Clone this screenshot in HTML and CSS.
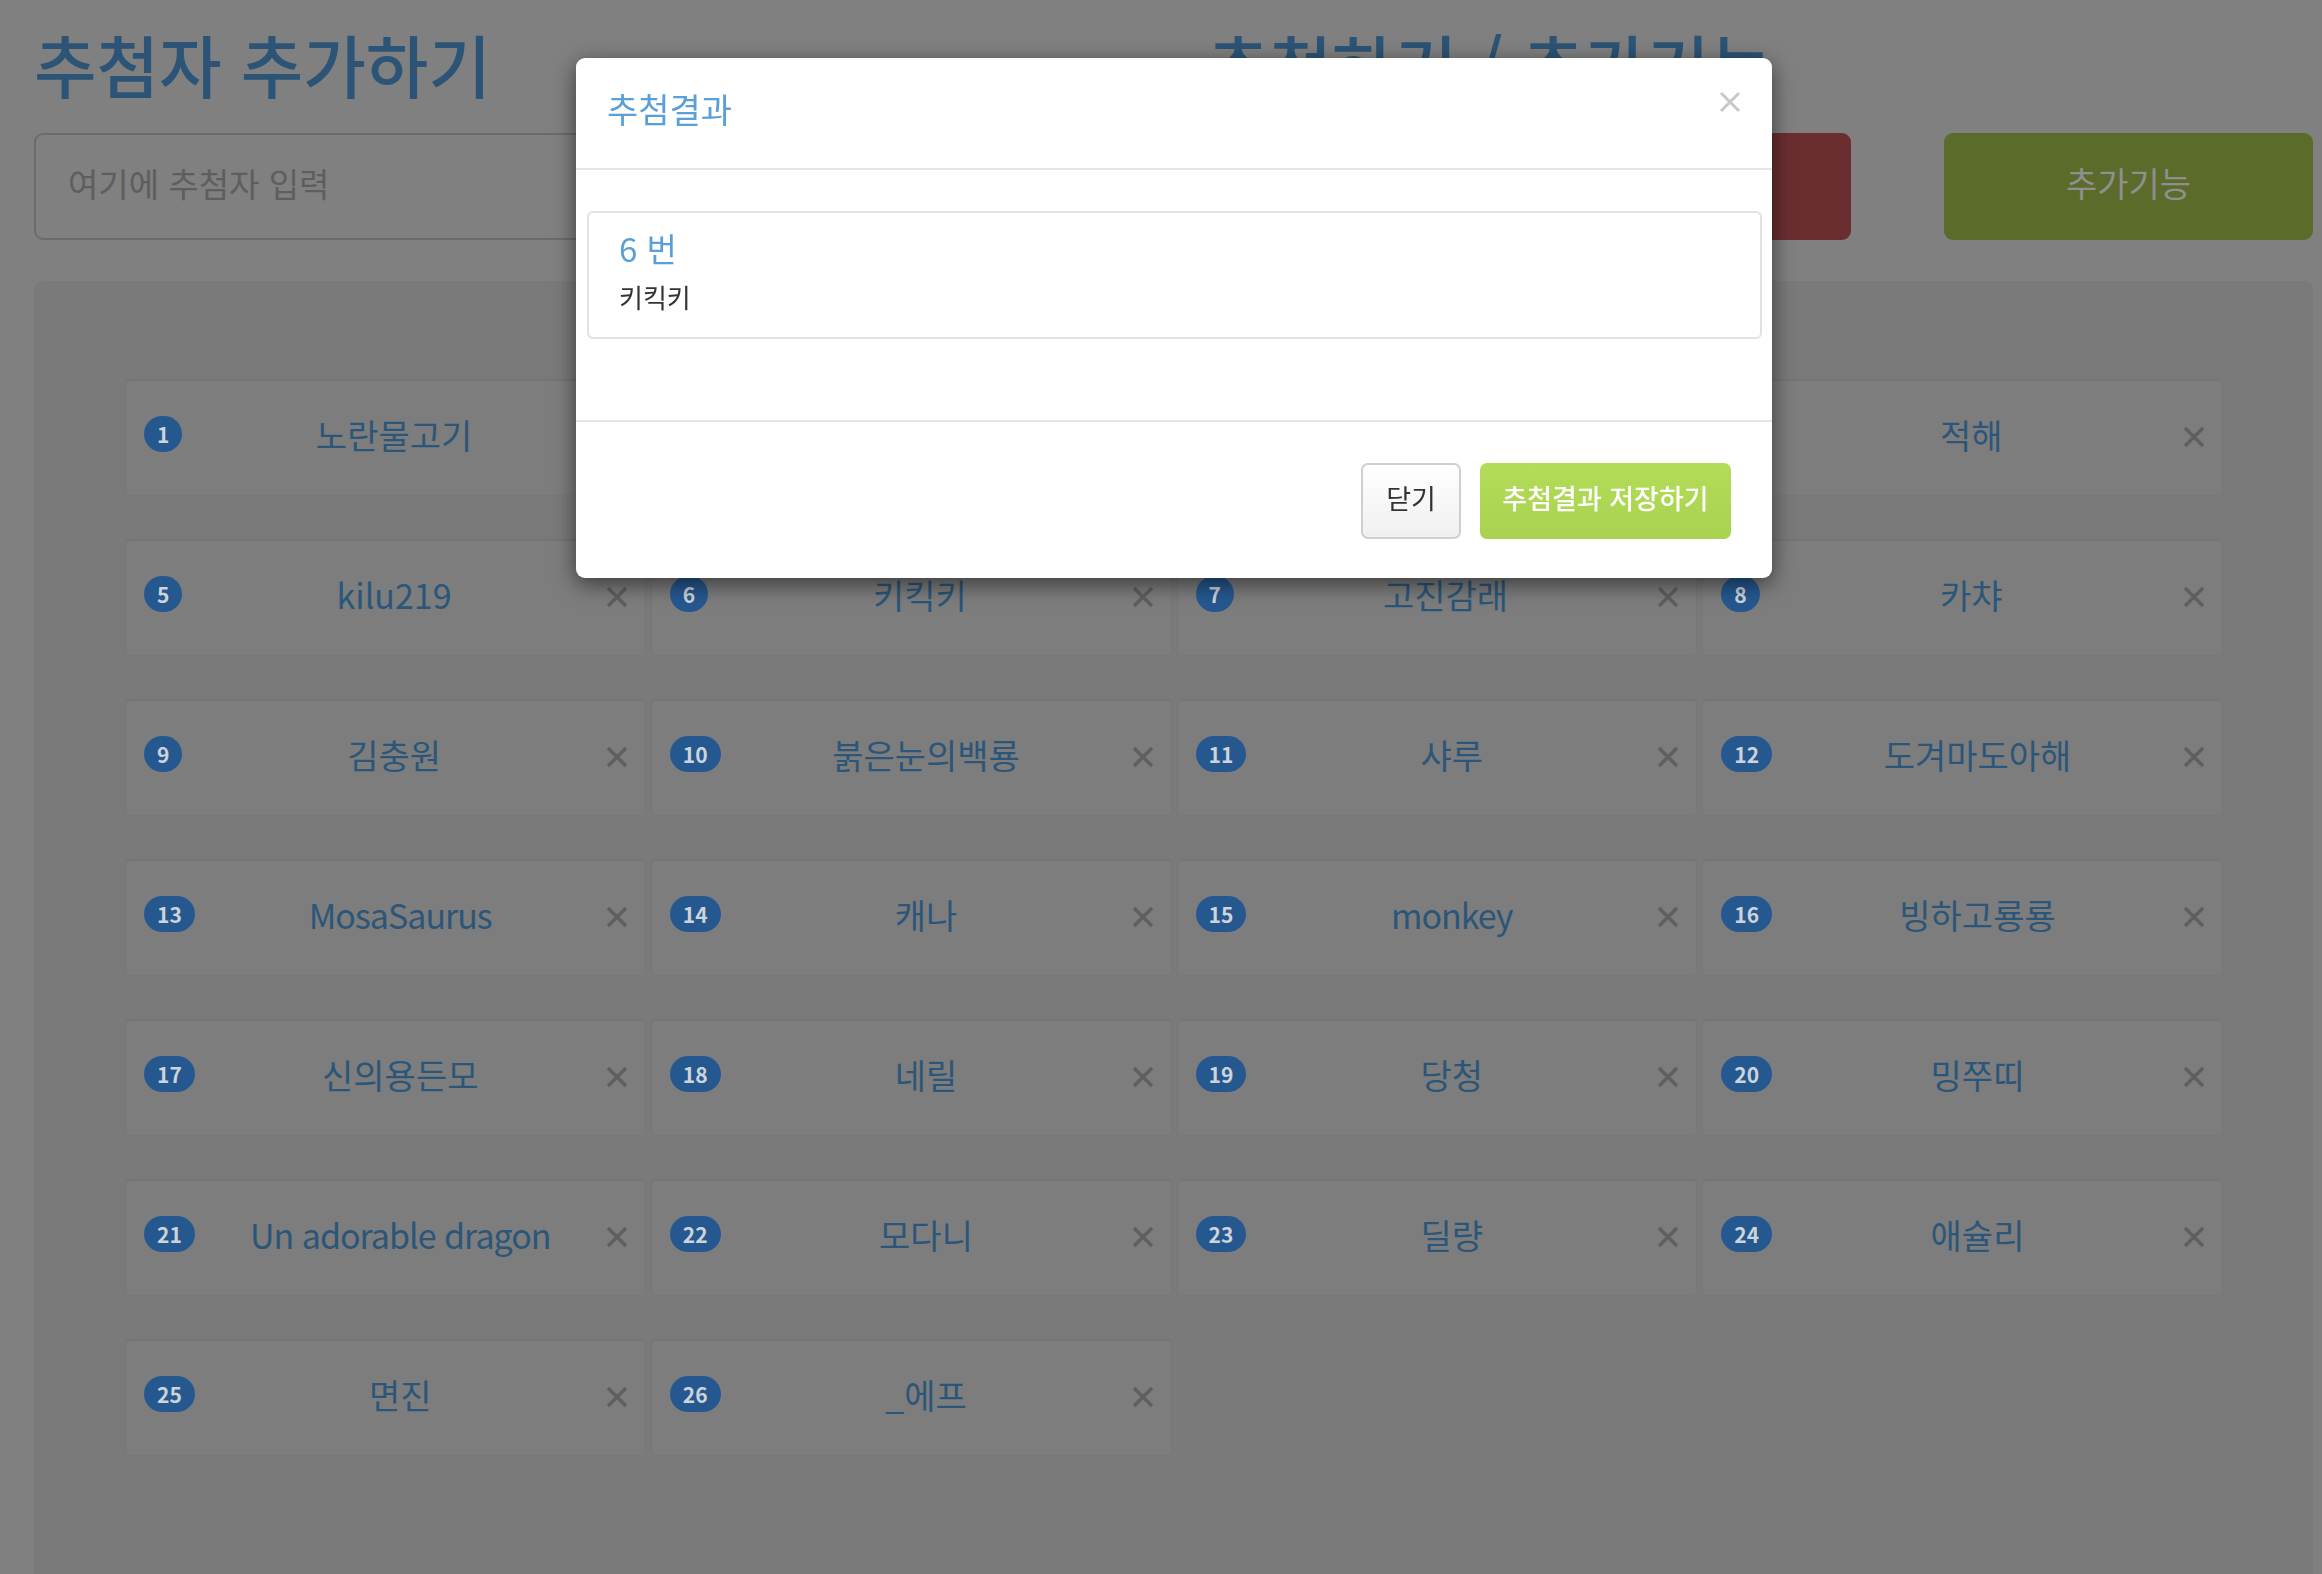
FILE: index.html
```html
<!DOCTYPE html>
<html lang="ko">
<head>
<meta charset="utf-8">
<title>추첨</title>
<link rel="stylesheet" href="styles.css">
</head>
<body>
<div class="page">
  <div class="top">
    <div class="col-left">
      <h1 class="title">추첨자 추가하기</h1>
      <div class="input">여기에 추첨자 입력</div>
    </div>
    <div class="col-right">
      <h1 class="title">추첨하기 / 추가기능</h1>
      <div class="btn-row">
        <div class="big-btn red">추첨하기</div>
        <div class="big-btn green">추가기능</div>
      </div>
    </div>
  </div>

  <div class="panel">
    <div class="grid">
      <div class="card"><span class="badge">1</span><span class="name">노란물고기</span><svg class="x" viewBox="0 0 22 22"><path d="M2 2L20 20M20 2L2 20"/></svg></div>
      <div class="card"><span class="badge">2</span><span class="name">바다</span><svg class="x" viewBox="0 0 22 22"><path d="M2 2L20 20M20 2L2 20"/></svg></div>
      <div class="card"><span class="badge">3</span><span class="name">하늘</span><svg class="x" viewBox="0 0 22 22"><path d="M2 2L20 20M20 2L2 20"/></svg></div>
      <div class="card"><span class="badge">4</span><span class="name">적해</span><svg class="x" viewBox="0 0 22 22"><path d="M2 2L20 20M20 2L2 20"/></svg></div>

      <div class="card"><span class="badge">5</span><span class="name">kilu219</span><svg class="x" viewBox="0 0 22 22"><path d="M2 2L20 20M20 2L2 20"/></svg></div>
      <div class="card"><span class="badge">6</span><span class="name">키킥키</span><svg class="x" viewBox="0 0 22 22"><path d="M2 2L20 20M20 2L2 20"/></svg></div>
      <div class="card"><span class="badge">7</span><span class="name">고진감래</span><svg class="x" viewBox="0 0 22 22"><path d="M2 2L20 20M20 2L2 20"/></svg></div>
      <div class="card"><span class="badge">8</span><span class="name">카챠</span><svg class="x" viewBox="0 0 22 22"><path d="M2 2L20 20M20 2L2 20"/></svg></div>

      <div class="card"><span class="badge">9</span><span class="name">김충원</span><svg class="x" viewBox="0 0 22 22"><path d="M2 2L20 20M20 2L2 20"/></svg></div>
      <div class="card"><span class="badge">10</span><span class="name">붉은눈의백룡</span><svg class="x" viewBox="0 0 22 22"><path d="M2 2L20 20M20 2L2 20"/></svg></div>
      <div class="card"><span class="badge">11</span><span class="name">샤루</span><svg class="x" viewBox="0 0 22 22"><path d="M2 2L20 20M20 2L2 20"/></svg></div>
      <div class="card"><span class="badge">12</span><span class="name">도겨마도아해</span><svg class="x" viewBox="0 0 22 22"><path d="M2 2L20 20M20 2L2 20"/></svg></div>

      <div class="card"><span class="badge">13</span><span class="name latin">MosaSaurus</span><svg class="x" viewBox="0 0 22 22"><path d="M2 2L20 20M20 2L2 20"/></svg></div>
      <div class="card"><span class="badge">14</span><span class="name">캐나</span><svg class="x" viewBox="0 0 22 22"><path d="M2 2L20 20M20 2L2 20"/></svg></div>
      <div class="card"><span class="badge">15</span><span class="name latin">monkey</span><svg class="x" viewBox="0 0 22 22"><path d="M2 2L20 20M20 2L2 20"/></svg></div>
      <div class="card"><span class="badge">16</span><span class="name">빙하고룡룡</span><svg class="x" viewBox="0 0 22 22"><path d="M2 2L20 20M20 2L2 20"/></svg></div>

      <div class="card"><span class="badge">17</span><span class="name">신의용든모</span><svg class="x" viewBox="0 0 22 22"><path d="M2 2L20 20M20 2L2 20"/></svg></div>
      <div class="card"><span class="badge">18</span><span class="name">네릴</span><svg class="x" viewBox="0 0 22 22"><path d="M2 2L20 20M20 2L2 20"/></svg></div>
      <div class="card"><span class="badge">19</span><span class="name">당청</span><svg class="x" viewBox="0 0 22 22"><path d="M2 2L20 20M20 2L2 20"/></svg></div>
      <div class="card"><span class="badge">20</span><span class="name">밍쭈띠</span><svg class="x" viewBox="0 0 22 22"><path d="M2 2L20 20M20 2L2 20"/></svg></div>

      <div class="card"><span class="badge">21</span><span class="name latin">Un adorable dragon</span><svg class="x" viewBox="0 0 22 22"><path d="M2 2L20 20M20 2L2 20"/></svg></div>
      <div class="card"><span class="badge">22</span><span class="name">모다니</span><svg class="x" viewBox="0 0 22 22"><path d="M2 2L20 20M20 2L2 20"/></svg></div>
      <div class="card"><span class="badge">23</span><span class="name">딜량</span><svg class="x" viewBox="0 0 22 22"><path d="M2 2L20 20M20 2L2 20"/></svg></div>
      <div class="card"><span class="badge">24</span><span class="name">애슐리</span><svg class="x" viewBox="0 0 22 22"><path d="M2 2L20 20M20 2L2 20"/></svg></div>

      <div class="card"><span class="badge">25</span><span class="name">면진</span><svg class="x" viewBox="0 0 22 22"><path d="M2 2L20 20M20 2L2 20"/></svg></div>
      <div class="card"><span class="badge">26</span><span class="name">_에프</span><svg class="x" viewBox="0 0 22 22"><path d="M2 2L20 20M20 2L2 20"/></svg></div>
    </div>
  </div>
</div>

<div class="overlay">
  <div class="modal">
    <div class="modal-header">
      <div class="modal-title">추첨결과</div>
      <svg class="close" viewBox="0 0 22 22"><path d="M2 2L20 20M20 2L2 20"/></svg>
    </div>
    <div class="modal-body">
      <div class="result">
        <div class="result-num">6 번</div>
        <div class="result-name">키킥키</div>
      </div>
    </div>
    <div class="modal-footer">
      <div class="btn btn-close">닫기</div>
      <div class="btn btn-save">추첨결과 저장하기</div>
    </div>
  </div>
</div>
</body>
</html>
```

FILE: styles.css
```css
html, body {
  margin: 0;
  padding: 0;
}
body {
  background: #808080;
  font-family: "Noto Sans CJK KR", "Noto Sans", sans-serif;
  overflow: hidden;
}
.page {
  padding: 26px 9px 0 34px;
}
.top {
  display: flex;
  gap: 47px;
}
.col-left {
  width: 1126px;
}
.col-right {
  flex: 1;
}
.title {
  margin: 0 0 32px 0;
  font-size: 68px;
  line-height: 75px;
  font-weight: 500;
  color: #2b5476;
  white-space: nowrap;
}
.input {
  box-sizing: border-box;
  height: 107px;
  border: 2px solid #6b6b6b;
  border-radius: 9px;
  padding: 0 32px 8px;
  display: flex;
  align-items: center;
  font-size: 33px;
  color: #5e5e5e;
}
.btn-row {
  display: flex;
  justify-content: flex-end;
  gap: 93px;
}
.big-btn {
  box-sizing: border-box;
  width: 369px;
  height: 107px;
  padding-bottom: 8px;
  border-radius: 9px;
  display: flex;
  align-items: center;
  justify-content: center;
  font-size: 34px;
  color: #8f8f8f;
}
.big-btn.red { background: #6b2e30; }
.big-btn.green { background: #5a6b2a; }

.panel {
  margin-top: 41px;
  background: #7a7a7a;
  border-radius: 8px;
  padding: 100px 91px 160px 92px;
}
.grid {
  display: grid;
  grid-template-columns: repeat(4, 1fr);
  column-gap: 7px;
  row-gap: 46px;
}
.card {
  box-sizing: border-box;
  height: 114px;
  background: #7d7d7d;
  border-radius: 3px;
  box-shadow: 0 -2px 3px rgba(0, 0, 0, 0.05), 0 0 1px rgba(0, 0, 0, 0.08);
  display: flex;
  align-items: center;
  padding: 0 17px 8px 18px;
}
.badge {
  box-sizing: border-box;
  min-width: 37px;
  height: 36px;
  padding: 0 13px;
  border-radius: 18px;
  background: #265890;
  color: #cdd3da;
  font-size: 21px;
  font-weight: 700;
  display: flex;
  align-items: center;
  justify-content: center;
  line-height: 1;
}
.name {
  flex: 1;
  text-align: center;
  font-size: 34px;
  color: #2b5679;
  white-space: nowrap;
}
.name.latin {
  letter-spacing: -1px;
}
.x {
  width: 22px;
  height: 22px;
  margin-top: 6px;
  stroke: #5f5f5f;
  stroke-width: 3.5;
  fill: none;
}

.overlay {
  position: fixed;
  inset: 0;
  padding: 58px 0 0 576px;
}
.modal {
  width: 1196px;
  background: #fff;
  border-radius: 9px;
  box-shadow: 0 6px 22px rgba(0, 0, 0, 0.55);
}
.modal-header {
  display: flex;
  justify-content: space-between;
  align-items: flex-start;
  padding: 27px 31px 35px 31px;
  border-bottom: 2px solid #e5e5e5;
}
.modal-title {
  font-size: 34px;
  line-height: 48px;
  color: #5a9fd8;
}
.close {
  width: 22px;
  height: 22px;
  margin-top: 6px;
  stroke: #c8c8c8;
  stroke-width: 3;
  fill: none;
}
.modal-body {
  padding: 41px 10px 81px 11px;
}
.result {
  border: 2px solid #e2e2e2;
  border-radius: 6px;
  padding: 15px 30px 22px;
}
.result-num {
  font-size: 33px;
  line-height: 41px;
  color: #5a9fd8;
}
.result-name {
  margin-top: 10px;
  font-size: 26px;
  line-height: 36px;
  color: #333;
}
.modal-footer {
  display: flex;
  justify-content: flex-end;
  gap: 19px;
  padding: 41px 41px 39px;
  border-top: 2px solid #e5e5e5;
}
.btn {
  box-sizing: border-box;
  height: 76px;
  padding-bottom: 7px;
  border-radius: 7px;
  display: flex;
  align-items: center;
  justify-content: center;
  font-size: 27px;
}
.btn-close {
  width: 100px;
  border: 2px solid #cfcfcf;
  background: linear-gradient(#ffffff, #f0f0f0);
  color: #333;
}
.btn-save {
  width: 251px;
  background: linear-gradient(#b3dc58, #a8d250);
  color: #fff;
  font-weight: 500;
}
```
